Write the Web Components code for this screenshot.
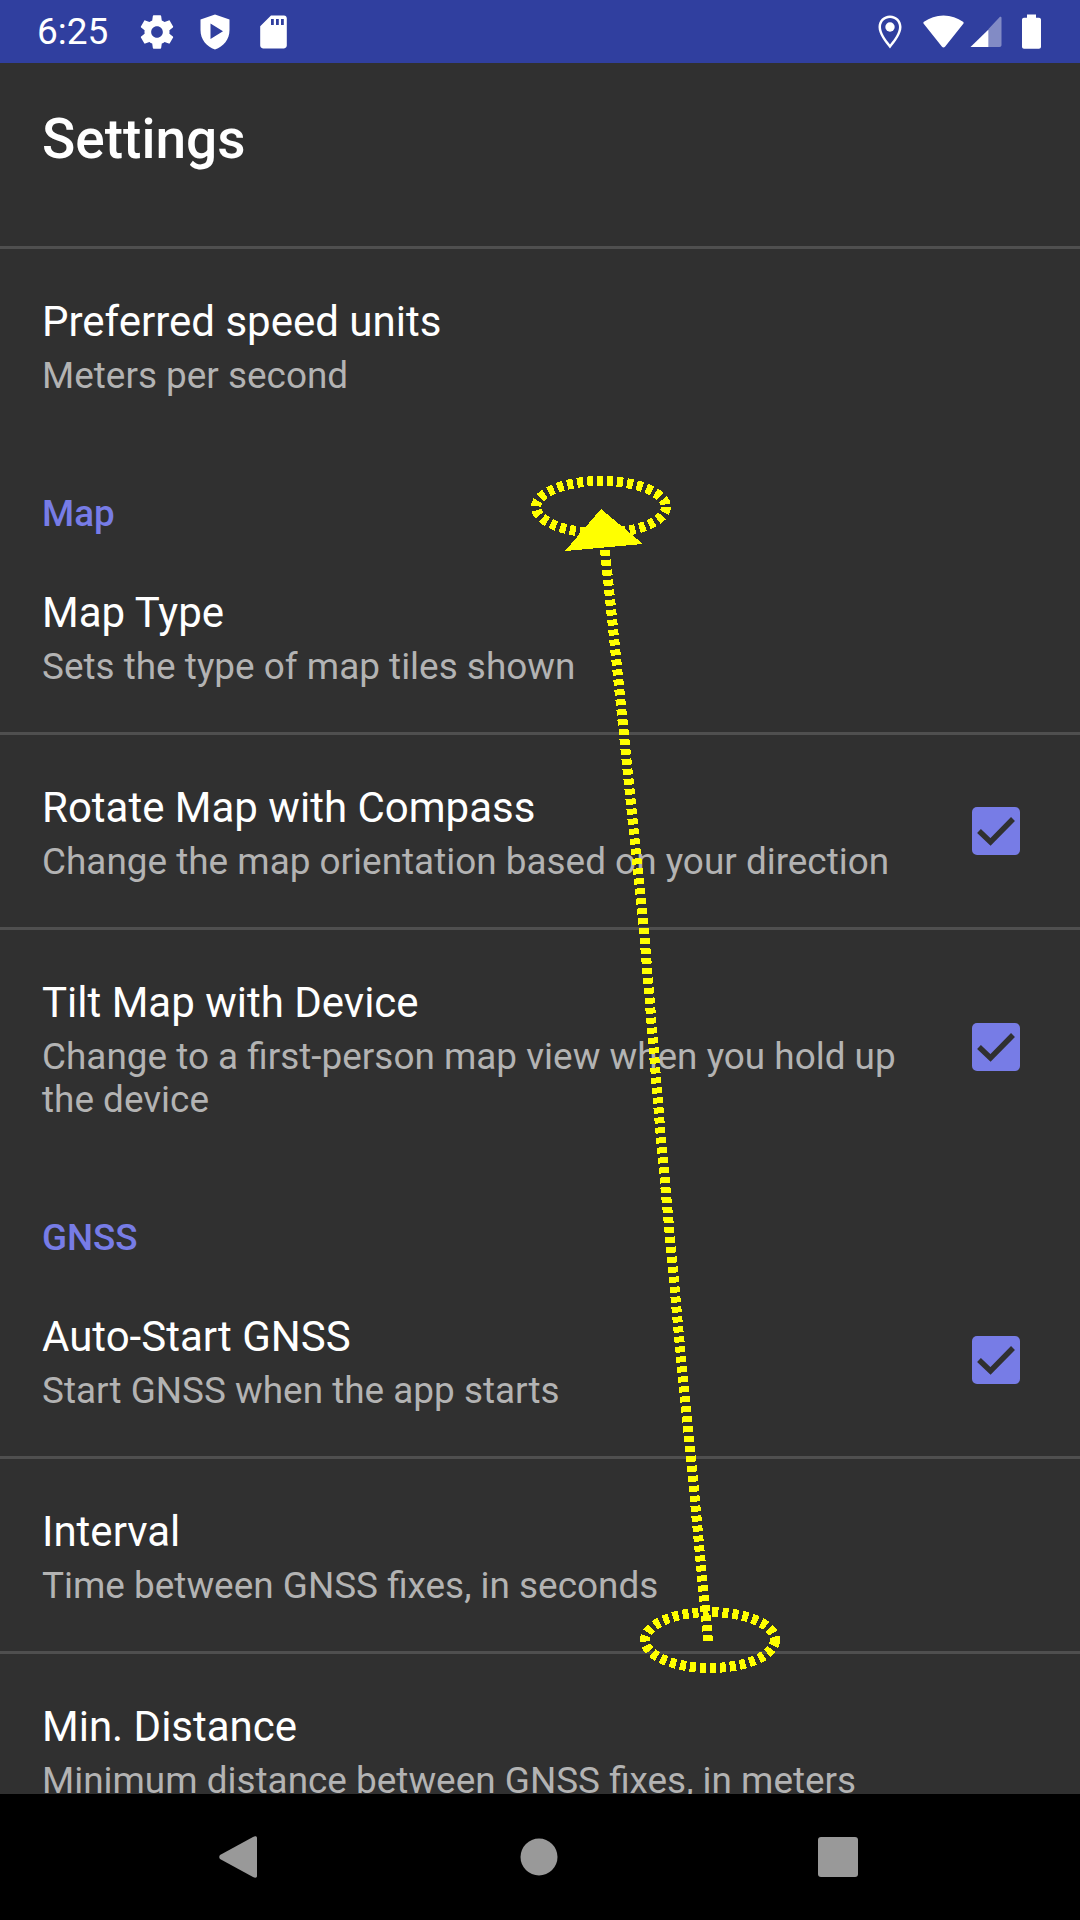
<!DOCTYPE html>
<html>
<head>
<meta charset="utf-8">
<title>Settings</title>
<style>
html, body { margin: 0; padding: 0; background: #303030; }
body { width: 1080px; height: 1920px; overflow: hidden; font-family: Roboto, "Liberation Sans", sans-serif; }
</style>
</head>
<body>
<phone-screen>
    <status-bar slot="status" time="6:25"></status-bar>
    <app-bar slot="top">Settings</app-bar>
    <pref-row>Preferred speed units<span slot="sub">Meters per second</span></pref-row>
    <pref-category>Map</pref-category>
    <pref-row divider>Map Type<span slot="sub">Sets the type of map tiles shown</span></pref-row>
    <pref-row divider checked>Rotate Map with Compass<span slot="sub">Change the map orientation based on your direction</span></pref-row>
    <pref-row checked>Tilt Map with Device<span slot="sub">Change to a first-person map view when you hold up the device</span></pref-row>
    <pref-category>GNSS</pref-category>
    <pref-row divider checked>Auto-Start GNSS<span slot="sub">Start GNSS when the app starts</span></pref-row>
    <pref-row divider>Interval<span slot="sub">Time between GNSS fixes, in seconds</span></pref-row>
    <pref-row>Min. Distance<span slot="sub">Minimum distance between GNSS fixes, in meters</span></pref-row>
    <nav-bar slot="nav"></nav-bar>
    <swipe-hint slot="overlay"></swipe-hint>
</phone-screen>

<script>
class PhoneScreen extends HTMLElement{
    constructor(){
        super()
        this.attachShadow({mode:'open'})
        this.shadowRoot.innerHTML = `
        <style>
            :host{
                display: flex;
                flex-direction: column;
                position: relative;
                width: 1080px;
                height: 1920px;
                overflow: hidden;
                background: #303030;
            }
            .list{
                flex: 1;
                min-height: 0;
                overflow: hidden;
            }
        </style>
        <slot name="status"></slot>
        <slot name="top"></slot>
        <div class="list"><slot></slot></div>
        <slot name="nav"></slot>
        <slot name="overlay"></slot>
        `
    }
}

class StatusBar extends HTMLElement{
    constructor(){
        super()
        this.attachShadow({mode:'open'})
    }
    connectedCallback(){
        this.render()
    }
    render(){
        this.shadowRoot.innerHTML = `
        <style>
            :host{
                display: flex;
                align-items: center;
                flex: none;
                height: 63px;
                box-sizing: border-box;
                padding: 0 39px 0 37px;
                background: #303f9f;
                color: #fff;
                font: 400 37px/63px Roboto, sans-serif;
            }
            svg{ display: block; fill: #fff; flex: none; }
            .time{ width: 73px; }
            .gear{ margin-left: 27px; }
            .shield{ margin-left: 23px; }
            .sd{ margin-left: 30px; }
            .space{ flex: 1; }
            .wifi{ margin-left: 21px; }
            .cell{ margin-left: 6px; }
            .battery{ margin-left: 20px; }
        </style>
        <span class="time">${this.getAttribute('time')}</span>
        <svg class="gear" width="40" height="40" viewBox="0 0 24 24"><path d="M19.43 12.98c.04-.32.07-.64.07-.98s-.03-.66-.07-.98l2.11-1.65c.19-.15.24-.42.12-.64l-2-3.46c-.12-.22-.39-.3-.61-.22l-2.49 1c-.52-.4-1.08-.73-1.69-.98l-.38-2.65C14.46 2.18 14.25 2 14 2h-4c-.25 0-.46.18-.49.42l-.38 2.65c-.61.25-1.17.59-1.69.98l-2.49-1c-.23-.09-.49 0-.61.22l-2 3.46c-.13.22-.07.49.12.64l2.11 1.65c-.04.32-.07.65-.07.98s.03.66.07.98l-2.11 1.65c-.19.15-.24.42-.12.64l2 3.46c.12.22.39.3.61.22l2.49-1c.52.4 1.08.73 1.69.98l.38 2.65c.03.24.24.42.49.42h4c.25 0 .46-.18.49-.42l.38-2.65c.61-.25 1.17-.59 1.69-.98l2.49 1c.23.09.49 0 .61-.22l2-3.46c.12-.22.07-.49-.12-.64l-2.11-1.65zM12 15.5c-1.93 0-3.5-1.57-3.5-3.5s1.57-3.5 3.5-3.5 3.5 1.57 3.5 3.5-1.57 3.5-3.5 3.5z"/></svg>
        <svg class="shield" width="30" height="36" viewBox="0 0 30 36"><path fill-rule="evenodd" d="M15 0.5L29.5 5.5V16C29.5 25.5 23.5 32.5 15 35.5C6.5 32.5 .5 25.5 .5 16V5.5ZM10.5 9.5V25L23 17.2Z"/></svg>
        <svg class="sd" width="27" height="34" viewBox="0 0 27 34"><path fill-rule="evenodd" d="M11 .5H24C25.6 .5 26.8 1.7 26.8 3.3V30.6C26.8 32.2 25.6 33.4 24 33.4H3C1.4 33.4 .2 32.2 .2 30.6V11.3ZM11 4V10H13.8V4ZM16 4V10H18.8V4ZM21 4V10H23.8V4Z"/></svg>
        <span class="space"></span>
        <svg class="pin" width="24" height="34" viewBox="0 0 24 34"><path fill-rule="evenodd" d="M12 .5C5.4 .5 .5 5.6 .5 12C.5 19 6.500 26.500 12 33.500C17.500 26.500 23.500 19 23.500 12C23.500 5.600 18.600 .5 12 .5ZM12 3C17 3 21 6.800 21 12C21 17.500 16.500 23.800 12 29.500C7.500 23.800 3 17.500 3 12C3 6.800 7 3 12 3Z"/><circle cx="12" cy="12" r="4.700"/></svg>
        <svg class="wifi" width="41" height="33" viewBox="0 0 41 33"><path d="M.5 8.500C.2 7.800 .4 7.200 1 6.800C6.500 2.800 13 .5 20.500 .5S34.500 2.800 40 6.800C40.600 7.200 40.800 7.800 40.500 8.500L22 31.700C21.200 32.700 19.800 32.700 19 31.700Z"/></svg>
        <svg class="cell" width="32" height="32" viewBox="0 0 32 32"><path opacity=".4" d="M18.500 31V13L29.500 1.200C30.400 .3 31.500 .7 31.500 2V29C31.500 30.200 30.700 31 29.500 31Z"/><path d="M18.500 13.500L.5 31H18.500Z"/></svg>
        <svg class="battery" width="19" height="35" viewBox="0 0 19 35"><path d="M5 .5H14V3.800H17C18.100 3.800 19 4.700 19 5.800V32.800C19 33.900 18.100 34.800 17 34.800H2C.9 34.800 0 33.900 0 32.800V5.800C0 4.700 .9 3.800 2 3.800H5Z"/></svg>
        `
    }
}

class AppBar extends HTMLElement{
    constructor(){
        super()
        this.attachShadow({mode:'open'})
        this.shadowRoot.innerHTML = `
        <style>
            :host{
                display: block;
                flex: none;
                height: 186px;
                box-sizing: border-box;
                padding: 46px 42px 0;
                border-bottom: 3px solid #4f4f4f;
                color: #fff;
                font: 500 55px/60px Roboto, sans-serif;
            }
        </style>
        <slot></slot>
        `
    }
}

class PrefCategory extends HTMLElement{
    constructor(){
        super()
        this.attachShadow({mode:'open'})
        this.shadowRoot.innerHTML = `
        <style>
            :host{
                display: block;
                height: 96px;
                box-sizing: border-box;
                padding: 48px 42px 0;
                color: #777ce6;
                font: 500 36.750px/43px Roboto, sans-serif;
            }
        </style>
        <slot></slot>
        `
    }
}

class PrefRow extends HTMLElement{
    constructor(){
        super()
        this.attachShadow({mode:'open'})
    }
    connectedCallback(){
        this.render()
    }
    render(){
        const box = this.hasAttribute('checked') ? '<check-box></check-box>' : ''
        this.shadowRoot.innerHTML = `
        <style>
            :host{
                display: flex;
                align-items: center;
                box-sizing: border-box;
                padding: 48px 60px 47px 42px;
                ${this.hasAttribute('divider') ? 'border-bottom: 3px solid #4f4f4f; padding-bottom: 44px;' : ''}
            }
            .text{
                flex: 1;
                min-width: 0;
                padding-right: 48px;
            }
            .title{
                color: #fff;
                font: 400 42px/49px Roboto, sans-serif;
            }
            .sub{
                margin-top: 8px;
                color: #b3b3b3;
                font: 400 36.900px/43px Roboto, sans-serif;
            }
            check-box{ margin-bottom: 5px; }
        </style>
        <div class="text">
            <div class="title"><slot></slot></div>
            <div class="sub"><slot name="sub"></slot></div>
        </div>
        ${box}
        `
    }
}

class CheckBox extends HTMLElement{
    constructor(){
        super()
        this.attachShadow({mode:'open'})
        this.shadowRoot.innerHTML = `
        <style>
            :host{
                display: block;
                flex: none;
                width: 48px;
                height: 48px;
                border-radius: 5px;
                background: #777ce6;
            }
            svg{ display: block; }
        </style>
        <svg width="48" height="48" viewBox="0 0 48 48"><path d="M7 24L18.500 35L41 12" fill="none" stroke="#303030" stroke-width="5.500"/></svg>
        `
    }
}

class NavBar extends HTMLElement{
    constructor(){
        super()
        this.attachShadow({mode:'open'})
        this.shadowRoot.innerHTML = `
        <style>
            :host{
                display: block;
                flex: none;
                height: 126px;
                background: #000;
            }
            .row{
                display: grid;
                grid-template-columns: repeat(3, 300px);
                justify-content: center;
                align-items: center;
                height: 126px;
                padding-right: 4px;
            }
            svg{ display: block; justify-self: center; fill: #999; }
            .home{ margin-left: 2px; }
        </style>
        <div class="row">
            <svg width="38" height="42" viewBox="0 0 38 42"><path d="M1 23C0 21.500 0 20.500 1 19L34 1C36 0 38 0 38 2V40C38 42 36 42 34 41Z"/></svg>
            <svg class="home" width="38" height="38" viewBox="0 0 38 38"><circle cx="19" cy="19" r="18.500"/></svg>
            <svg width="40" height="40" viewBox="0 0 40 40"><rect width="40" height="40" rx="3"/></svg>
        </div>
        `
    }
}

class SwipeHint extends HTMLElement{
    constructor(){
        super()
        this.attachShadow({mode:'open'})
        this.shadowRoot.innerHTML = `
        <style>
            :host{
                position: absolute;
                left: 0;
                top: 0;
                width: 1080px;
                height: 1920px;
                pointer-events: none;
            }
            svg{ display: block; shape-rendering: crispEdges; }
            .dash{ fill: none; stroke: #ffff00; stroke-width: 10; stroke-dasharray: 6 4; }
        </style>
        <svg width="1080" height="1920" viewBox="0 0 1080 1920">
            <ellipse class="dash" cx="601" cy="507" rx="65" ry="26"/>
            <ellipse class="dash" cx="710" cy="1640" rx="65" ry="28"/>
            <polyline class="dash" points="605,550 624,735 645,943 661,1139 680,1347 692,1469 708,1641"/>
            <path d="M601 509L643 544L565 551Z" fill="#ffff00"/>
        </svg>
        `
    }
}

window.customElements.define('phone-screen',PhoneScreen)
window.customElements.define('status-bar',StatusBar)
window.customElements.define('app-bar',AppBar)
window.customElements.define('pref-category',PrefCategory)
window.customElements.define('check-box',CheckBox)
window.customElements.define('pref-row',PrefRow)
window.customElements.define('nav-bar',NavBar)
window.customElements.define('swipe-hint',SwipeHint)
</script>
</body>
</html>
